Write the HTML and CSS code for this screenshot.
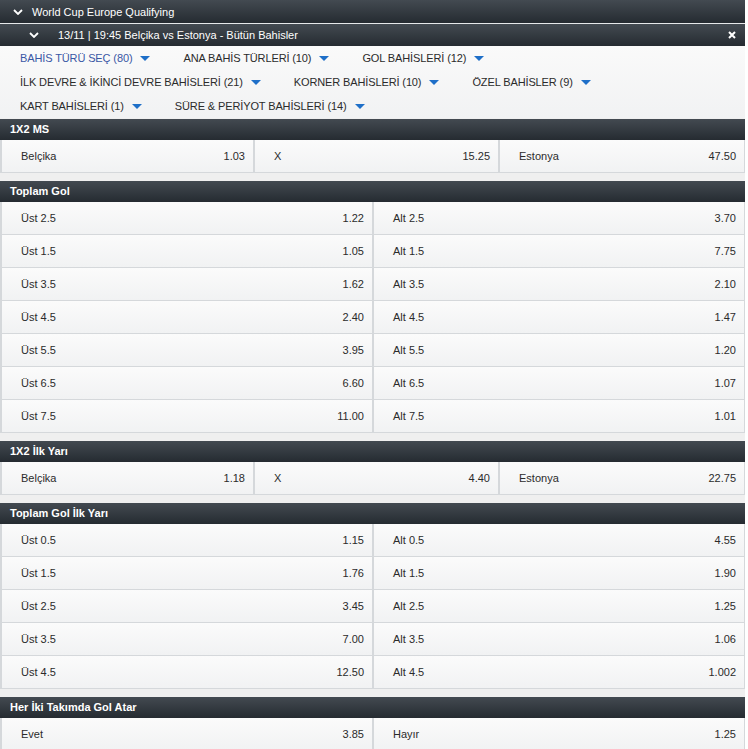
FILE: index.html
```html
<!DOCTYPE html>
<html lang="tr">
<head>
    <meta charset="UTF-8">
    <title>Belçika vs Estonya - Bütün Bahisler</title>
    <link rel="stylesheet" href="styles.css">
</head>
<body>
<div class="page">
    <div class="league-bar">
        <svg class="chevron" width="10" height="6" viewBox="0 0 10 6"><path d="M1 1 L5 5 L9 1" fill="none" stroke="#fff" stroke-width="1.8"/></svg>
        <span>World Cup Europe Qualifying</span>
    </div>
    <div class="match-bar">
        <svg class="chevron" width="10" height="6" viewBox="0 0 10 6"><path d="M1 1 L5 5 L9 1" fill="none" stroke="#fff" stroke-width="1.8"/></svg>
        <span>13/11 | 19:45 Belçika vs Estonya - Bütün Bahisler</span>
        <svg class="close" width="8" height="8" viewBox="0 0 8 8"><path d="M1 1 L7 7 M7 1 L1 7" stroke="#fff" stroke-width="2"/></svg>
    </div>

    <div class="filters">
        <span class="filter active">BAHİS TÜRÜ SEÇ (80) <i class="caret"></i></span>
        <span class="filter">ANA BAHİS TÜRLERİ (10) <i class="caret"></i></span>
        <span class="filter">GOL BAHİSLERİ (12) <i class="caret"></i></span>
        <span class="filter">İLK DEVRE &amp; İKİNCİ DEVRE BAHİSLERİ (21) <i class="caret"></i></span>
        <span class="filter">KORNER BAHİSLERİ (10) <i class="caret"></i></span>
        <span class="filter">ÖZEL BAHİSLER (9) <i class="caret"></i></span>
        <span class="filter">KART BAHİSLERİ (1) <i class="caret"></i></span>
        <span class="filter">SÜRE &amp; PERİYOT BAHİSLERİ (14) <i class="caret"></i></span>
    </div>

    <!-- 1X2 MS -->
    <section class="market">
        <h3>1X2 MS</h3>
        <div class="odds three">
            <div class="cell"><span>Belçika</span><b>1.03</b></div>
            <div class="cell"><span>X</span><b>15.25</b></div>
            <div class="cell"><span>Estonya</span><b>47.50</b></div>
        </div>
    </section>

    <!-- Toplam Gol -->
    <section class="market">
        <h3>Toplam Gol</h3>
        <div class="odds two">
            <div class="cell"><span>Üst 2.5</span><b>1.22</b></div>
            <div class="cell"><span>Alt 2.5</span><b>3.70</b></div>
            <div class="cell"><span>Üst 1.5</span><b>1.05</b></div>
            <div class="cell"><span>Alt 1.5</span><b>7.75</b></div>
            <div class="cell"><span>Üst 3.5</span><b>1.62</b></div>
            <div class="cell"><span>Alt 3.5</span><b>2.10</b></div>
            <div class="cell"><span>Üst 4.5</span><b>2.40</b></div>
            <div class="cell"><span>Alt 4.5</span><b>1.47</b></div>
            <div class="cell"><span>Üst 5.5</span><b>3.95</b></div>
            <div class="cell"><span>Alt 5.5</span><b>1.20</b></div>
            <div class="cell"><span>Üst 6.5</span><b>6.60</b></div>
            <div class="cell"><span>Alt 6.5</span><b>1.07</b></div>
            <div class="cell"><span>Üst 7.5</span><b>11.00</b></div>
            <div class="cell"><span>Alt 7.5</span><b>1.01</b></div>
        </div>
    </section>

    <!-- 1X2 İlk Yarı -->
    <section class="market">
        <h3>1X2 İlk Yarı</h3>
        <div class="odds three">
            <div class="cell"><span>Belçika</span><b>1.18</b></div>
            <div class="cell"><span>X</span><b>4.40</b></div>
            <div class="cell"><span>Estonya</span><b>22.75</b></div>
        </div>
    </section>

    <!-- Toplam Gol İlk Yarı -->
    <section class="market">
        <h3>Toplam Gol İlk Yarı</h3>
        <div class="odds two">
            <div class="cell"><span>Üst 0.5</span><b>1.15</b></div>
            <div class="cell"><span>Alt 0.5</span><b>4.55</b></div>
            <div class="cell"><span>Üst 1.5</span><b>1.76</b></div>
            <div class="cell"><span>Alt 1.5</span><b>1.90</b></div>
            <div class="cell"><span>Üst 2.5</span><b>3.45</b></div>
            <div class="cell"><span>Alt 2.5</span><b>1.25</b></div>
            <div class="cell"><span>Üst 3.5</span><b>7.00</b></div>
            <div class="cell"><span>Alt 3.5</span><b>1.06</b></div>
            <div class="cell"><span>Üst 4.5</span><b>12.50</b></div>
            <div class="cell"><span>Alt 4.5</span><b>1.002</b></div>
        </div>
    </section>

    <!-- Her İki Takımda Gol Atar -->
    <section class="market">
        <h3>Her İki Takımda Gol Atar</h3>
        <div class="odds two">
            <div class="cell"><span>Evet</span><b>3.85</b></div>
            <div class="cell"><span>Hayır</span><b>1.25</b></div>
        </div>
    </section>
</div>
</body>
</html>
```

FILE: styles.css
```css
/* genel */
body {
    margin: 0;
    background: #fff;
    font-family: "Liberation Sans", Arial, sans-serif;
    font-size: 11px;
    color: #2b2b2b;
}

.page {
    width: 745px;
    background: #efefef;
}

/* üst başlıklar */
.league-bar,
.match-bar {
    display: flex;
    align-items: center;
    color: #fff;
    background: linear-gradient(#434a51, #252b31);
}

.league-bar {
    height: 23px;
    padding-left: 13px;
    border-bottom: 1px solid #e6e8ea;
}

.league-bar .chevron {
    margin-right: 9px;
}

.match-bar {
    height: 22px;
    padding-left: 29px;
    padding-right: 9px;
}

.match-bar .chevron {
    margin-right: 19px;
}

.match-bar .close {
    margin-left: auto;
}

/* filtreler */
.filters {
    display: flex;
    flex-wrap: wrap;
    padding: 0 0 0 20px;
    height: 72px;
    background: linear-gradient(#fafafa, #f1f2f3);
}

.filter {
    display: inline-flex;
    align-items: center;
    gap: 8px;
    height: 24px;
    margin-right: 33px;
    color: #2b2b2b;
    letter-spacing: -0.12px;
    white-space: nowrap;
}

.filter.active {
    color: #3957a5;
}

.caret {
    width: 0;
    height: 0;
    border-left: 5px solid transparent;
    border-right: 5px solid transparent;
    border-top: 5px solid #1e6fc8;
}

/* marketler */
.market {
    margin-top: 1px;
    margin-bottom: 8px;
}

.market h3 {
    margin: 0;
    height: 21px;
    line-height: 21px;
    padding-left: 10px;
    font-size: 11px;
    font-weight: bold;
    color: #fff;
    background: linear-gradient(#434a51, #252b31);
}

.odds {
    display: grid;
    border-left: 1px solid #d5d8db;
}

.odds.two {
    grid-template-columns: 372px 1fr;
}

.odds.three {
    grid-template-columns: 253px 245px 1fr;
}

.cell {
    display: flex;
    align-items: center;
    justify-content: space-between;
    height: 32px;
    padding: 0 8px 0 19px;
    background: linear-gradient(#fbfbfb, #f1f2f3);
    border-left: 1px solid #d5d8db;
    border-right: 1px solid #d5d8db;
    border-bottom: 1px solid #d5d8db;
}

.cell b {
    font-weight: normal;
}
```
